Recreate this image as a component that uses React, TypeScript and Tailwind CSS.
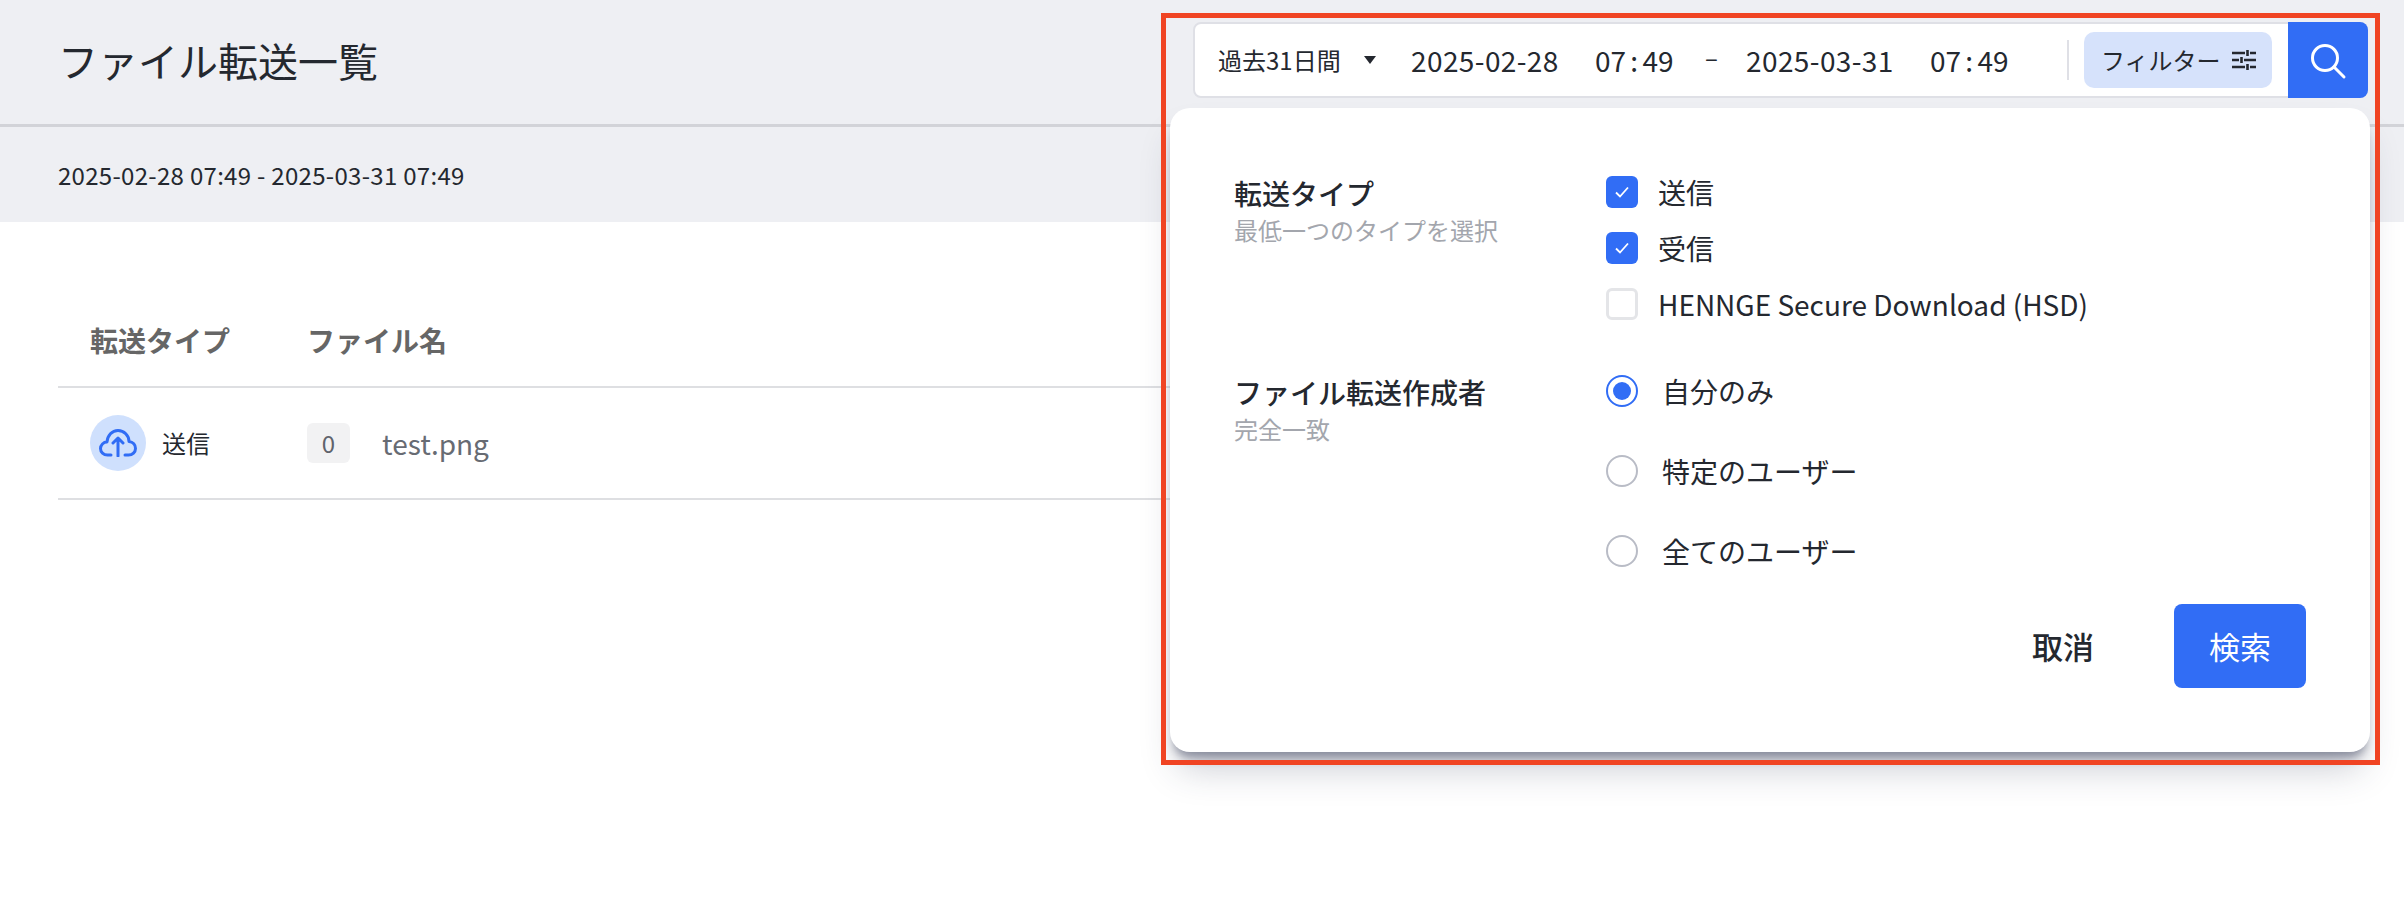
export default function App() {
  const jp = "font-['Noto_Sans_CJK_JP','Noto_Sans',sans-serif]";
  return (
    <div className={`relative min-h-screen w-full overflow-hidden bg-white text-[#24282f] ${jp}`}>
      <header className="flex h-[127px] items-start justify-between border-b-[3px] border-[#d2d3d8] bg-[#eeeff3] pl-[58px] pr-[36px]">
        <h1 className="mt-[30px] text-[40px] leading-[60px] font-normal">ファイル転送一覧</h1>
        <div className="relative mt-[22px] flex h-[76px] w-[1175px] items-center rounded-lg border-2 border-[#dfe0e6] bg-white pl-[23px]">
          <span className="w-[126px] shrink-0 text-[24px] leading-[36px]">過去31日間</span>
          <span className="ml-[20px] h-0 w-0 shrink-0 border-x-[6px] border-t-[8px] border-x-transparent border-t-[#24282f]" />
          <span className="ml-[35px] w-[184px] shrink-0 text-[28px] leading-[40px] tracking-[0.4px]">2025-02-28</span>
          <span className="w-[110px] shrink-0 text-[28px] leading-[40px] [word-spacing:-2px]">07 : 49</span>
          <span className="w-[41px] shrink-0 pb-[6px] text-[24px] leading-[36px]">–</span>
          <span className="w-[184px] shrink-0 text-[28px] leading-[40px] tracking-[0.4px]">2025-03-31</span>
          <span className="w-[137px] shrink-0 text-[28px] leading-[40px] [word-spacing:-2px]">07 : 49</span>
          <span className="h-[40px] w-[2px] shrink-0 bg-[#dfe0e6]" />
          <button className="ml-[15px] flex h-[56px] w-[188px] shrink-0 items-center rounded-[10px] bg-[#d6e2fb] pl-[17px] text-[24px]">
            <span>フィルター</span>
            <svg className="ml-[11px]" width="24" height="22" viewBox="0 0 24 22" fill="none" stroke="#24282f" strokeWidth="2.6">
              <path d="M0 4h13M18 4h6M0 11h7M12 11h12M0 18h13M18 18h6" />
              <path d="M15.5 1v6M9.5 8v6M15.5 15v6" />
            </svg>
          </button>
          <button className="-mr-[2px] ml-[16px] flex h-[76px] w-[80px] shrink-0 items-center justify-center rounded-r-lg bg-[#316df5]">
            <svg className="mt-[4px]" width="38" height="38" viewBox="0 0 38 38" fill="none" stroke="#fff" strokeWidth="3" strokeLinecap="round">
              <circle cx="16" cy="15" r="12.5" />
              <path d="M25 24l10 10" />
            </svg>
          </button>
          <div className="absolute left-[-25px] top-[84px] h-[644px] w-[1200px] rounded-[20px] bg-white pl-[64px] pr-[64px] shadow-[0_10px_10px_-4px_rgba(45,52,80,0.45),0_24px_36px_-8px_rgba(45,52,80,0.25)]">
            <div className="flex pt-[68px]">
              <div className="w-[372px]">
                <div className="text-[28px] leading-[34px] font-medium">転送タイプ</div>
                <div className="mt-[2px] text-[24px] leading-[36px] text-[#a3a6ad]">最低一つのタイプを選択</div>
              </div>
              <div className="flex flex-col gap-[24px]">
                {[["送信", true], ["受信", true], ["HENNGE Secure Download (HSD)", false]].map(([t, c]) => (
                  <label key={String(t)} className="flex h-[32px] items-center gap-[20px] text-[28px]">
                    {c ? (
                      <span className="flex h-[32px] w-[32px] items-center justify-center rounded-[6px] bg-[#316df5]">
                        <svg width="16" height="14" viewBox="0 0 16 14" fill="none" stroke="#fff" strokeWidth="1.8">
                          <path d="M2 7.5l4 4 8-9" />
                        </svg>
                      </span>
                    ) : (
                      <span className="h-[32px] w-[32px] rounded-[6px] border-[3px] border-[#e4e5e8] bg-white" />
                    )}
                    <span>{t}</span>
                  </label>
                ))}
              </div>
            </div>
            <div className="flex pt-[55px]">
              <div className="w-[372px]">
                <div className="text-[28px] leading-[34px] font-medium">ファイル転送作成者</div>
                <div className="mt-[2px] text-[24px] leading-[36px] text-[#a3a6ad]">完全一致</div>
              </div>
              <div className="flex flex-col gap-[48px]">
                {["自分のみ", "特定のユーザー", "全てのユーザー"].map((t, i) => (
                  <label key={t} className="flex h-[32px] items-center gap-[24px] text-[28px]">
                    {i === 0 ? (
                      <span className="flex h-[32px] w-[32px] items-center justify-center rounded-full border-2 border-[#316df5]">
                        <span className="h-[18px] w-[18px] rounded-full bg-[#316df5]" />
                      </span>
                    ) : (
                      <span className="h-[32px] w-[32px] rounded-full border-2 border-[#b9bcc6]" />
                    )}
                    <span>{t}</span>
                  </label>
                ))}
              </div>
            </div>
            <div className="mt-[37px] flex items-center justify-end">
              <button className="mr-[80px] text-[31px] font-medium">取消</button>
              <button className="h-[84px] w-[132px] rounded-lg bg-[#316df5] text-[31px] text-white">検索</button>
            </div>
          </div>
        </div>
      </header>
      <div className="flex h-[95px] items-center bg-[#eeeff3] pl-[58px] text-[24px] leading-[36px] tracking-[0.3px]">
        2025-02-28 07:49 - 2025-03-31 07:49
      </div>
      <div className="mx-[58px] mt-[84px]">
        <div className="flex h-[82px] items-center border-b-[2px] border-[#dedfe2] pb-[12px] pl-[32px] text-[28px] font-bold text-[#666]">
          <div className="w-[217px]">転送タイプ</div>
          <div>ファイル名</div>
        </div>
        <div className="flex h-[112px] items-center border-b-[2px] border-[#dedfe2] pl-[32px]">
          <div className="flex w-[217px] items-center gap-[16px]">
            <span className="flex h-[56px] w-[56px] items-center justify-center rounded-full bg-[#cfe0fd]">
              <svg width="38" height="28" viewBox="0 0 38 28" fill="none" stroke="#316df5" strokeWidth="3" strokeLinejoin="round" strokeLinecap="round">
                <path d="M12 26H8.5C4.5 26 1.5 23 1.5 19.5S4.5 13 8 13C8.5 6.5 13 1.5 19 1.5S30 6.5 30 12.5C34 13 36.5 16 36.5 19.5S33.5 26 29.5 26H26" />
                <path d="M19 27V9M14 14l5-5 5 5" />
              </svg>
            </span>
            <span className="text-[24px]">送信</span>
          </div>
          <span className="flex h-[40px] w-[43px] items-center justify-center rounded-[6px] bg-[#f2f2f3] text-[24px] text-[#5f636b]">0</span>
          <span className="ml-[32px] text-[28px] text-[#676b73]">test.png</span>
        </div>
      </div>
      <div className="pointer-events-none absolute left-[1161px] top-[13px] h-[752px] w-[1219px] border-[5px] border-[#f04423]" />
    </div>
  );
}
